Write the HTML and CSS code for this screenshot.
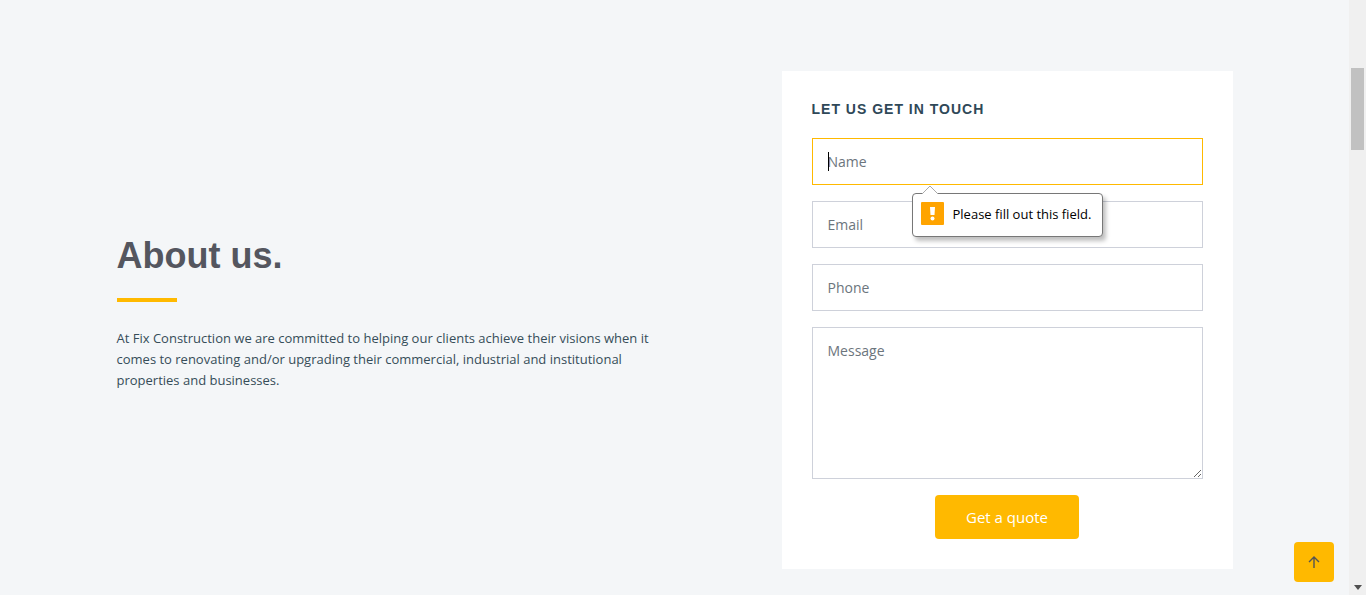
FILE: index.html
```html
<!DOCTYPE html>
<html lang="en">
<head>
<meta charset="utf-8">
<meta name="viewport" content="width=device-width, initial-scale=1">
<title>Fix Construction</title>
<link rel="stylesheet" href="styles.css">
</head>
<body>
<main class="page">
  <section class="container">
    <div class="about">
      <h1 class="about-title">About us.</h1>
      <p class="about-text">At Fix Construction we are committed to helping our clients achieve their visions when it comes to renovating and/or upgrading their commercial, industrial and institutional properties and businesses.</p>
    </div>
    <form class="card">
      <h2 class="card-title">Let us get in touch</h2>
      <div class="field">
        <input class="control control-active" type="text" placeholder="Name" aria-label="Name" required>
        <span class="caret" aria-hidden="true"></span>
        <div class="bubble" role="alert">
          <svg class="bubble-arrow" width="18" height="9" viewBox="0 0 18 9" aria-hidden="true"><path d="M1 9 9 1l8 8" fill="#fff" stroke="#aaa"/></svg>
          <svg width="23" height="23" viewBox="0 0 23 23" aria-hidden="true"><rect width="23" height="23" rx="1" fill="#ffa400"/><path d="M9 5h5l-.5 8h-4z" fill="#fff"/><circle cx="11.500" cy="16.500" r="2" fill="#fff"/></svg>
          <span>Please fill out this field.</span>
        </div>
      </div>
      <input class="control" type="email" placeholder="Email" aria-label="Email">
      <input class="control" type="tel" placeholder="Phone" aria-label="Phone">
      <textarea class="control message" placeholder="Message" aria-label="Message"></textarea>
      <button class="submit" type="submit">Get a quote</button>
    </form>
  </section>
  <a class="to-top" href="#" aria-label="Back to top">
    <svg width="12" height="14" viewBox="0 0 12 14" fill="none" stroke="#545454" stroke-width="1.400" aria-hidden="true"><path d="M6 13V2M1 7l5-5 5 5"/></svg>
  </a>
</main>
<div class="scrollbar" aria-hidden="true">
  <div class="thumb"></div>
  <svg width="8" height="5" viewBox="0 0 8 5"><path d="M0 0h8L4 5z" fill="#505050"/></svg>
</div>
</body>
</html>
```
FILE: styles.css
```css
* { box-sizing: border-box; }

body {
  margin: 0;
  min-height: 100vh;
  display: grid;
  grid-template-columns: 1fr 17px;
  background: #f4f6f8;
  color: #364d59;
  font: 13px/21px "Open Sans", "Noto Sans", sans-serif;
}

.page { padding: 71px 12px 26px; }

.container {
  max-width: 1116px;
  margin: 0 auto;
  display: grid;
  grid-template-columns: 546fr 451fr;
  column-gap: 119px;
  align-items: center;
}

.about { padding-bottom: 14px; }

.about-title {
  margin: 0 0 26px;
  color: #54565f;
  font: bold 36px/42px "Liberation Sans", Arial, sans-serif;
}

.about-title::after {
  content: "";
  display: block;
  width: 60px;
  height: 4px;
  margin-top: 21px;
  background: #ffb900;
}

.about-text { margin: 0; }

.card {
  display: flex;
  flex-direction: column;
  gap: 16px;
  padding: 30px;
  background: #fff;
}

.card-title {
  margin: 0 0 5px;
  color: #2f4858;
  font: bold 14px/16px "Liberation Sans", Arial, sans-serif;
  letter-spacing: 1px;
  text-transform: uppercase;
}

.field { position: relative; display: flex; }

.control {
  display: block;
  width: 100%;
  height: 47px;
  padding: 12px 15px;
  border: 1px solid #ced1da;
  border-radius: 0;
  outline: 0;
  background: #fff;
  color: #364d59;
  font: 14px/21px "Open Sans", "Noto Sans", sans-serif;
}

.control::placeholder { color: #6c757d; opacity: 1; }
.control-active { border-color: #ffb900; }
.message { height: 152px; resize: vertical; }

.caret {
  position: absolute;
  left: 16px;
  top: 14px;
  width: 1px;
  height: 19px;
  background: #000;
}

.bubble {
  position: absolute;
  z-index: 1;
  left: 100px;
  top: 55px;
  display: flex;
  align-items: flex-end;
  gap: 9px;
  padding: 8px 11px 11px 8px;
  border: 1px solid #777;
  border-radius: 4px;
  background: #fff;
  color: #000;
  white-space: nowrap;
  box-shadow: 3px 4px 4px rgba(0, 0, 0, .25);
}

.bubble-arrow { position: absolute; left: 8px; top: -9px; }

.submit {
  align-self: center;
  height: 44px;
  padding: 0 31px;
  border: 0;
  border-radius: 4px;
  background: #ffb900;
  color: #fff;
  font: 15px/24px "Open Sans", "Noto Sans", sans-serif;
}

.to-top {
  position: fixed;
  right: 32px;
  bottom: 13px;
  display: grid;
  place-items: center;
  width: 40px;
  height: 40px;
  border-radius: 4px;
  background: #ffb900;
}

.scrollbar {
  display: flex;
  flex-direction: column;
  align-items: center;
  justify-content: space-between;
  padding: 68px 0 5px;
  background: #f0f0f0;
}

.thumb { width: 13px; height: 82px; background: #c1c1c1; }
```
